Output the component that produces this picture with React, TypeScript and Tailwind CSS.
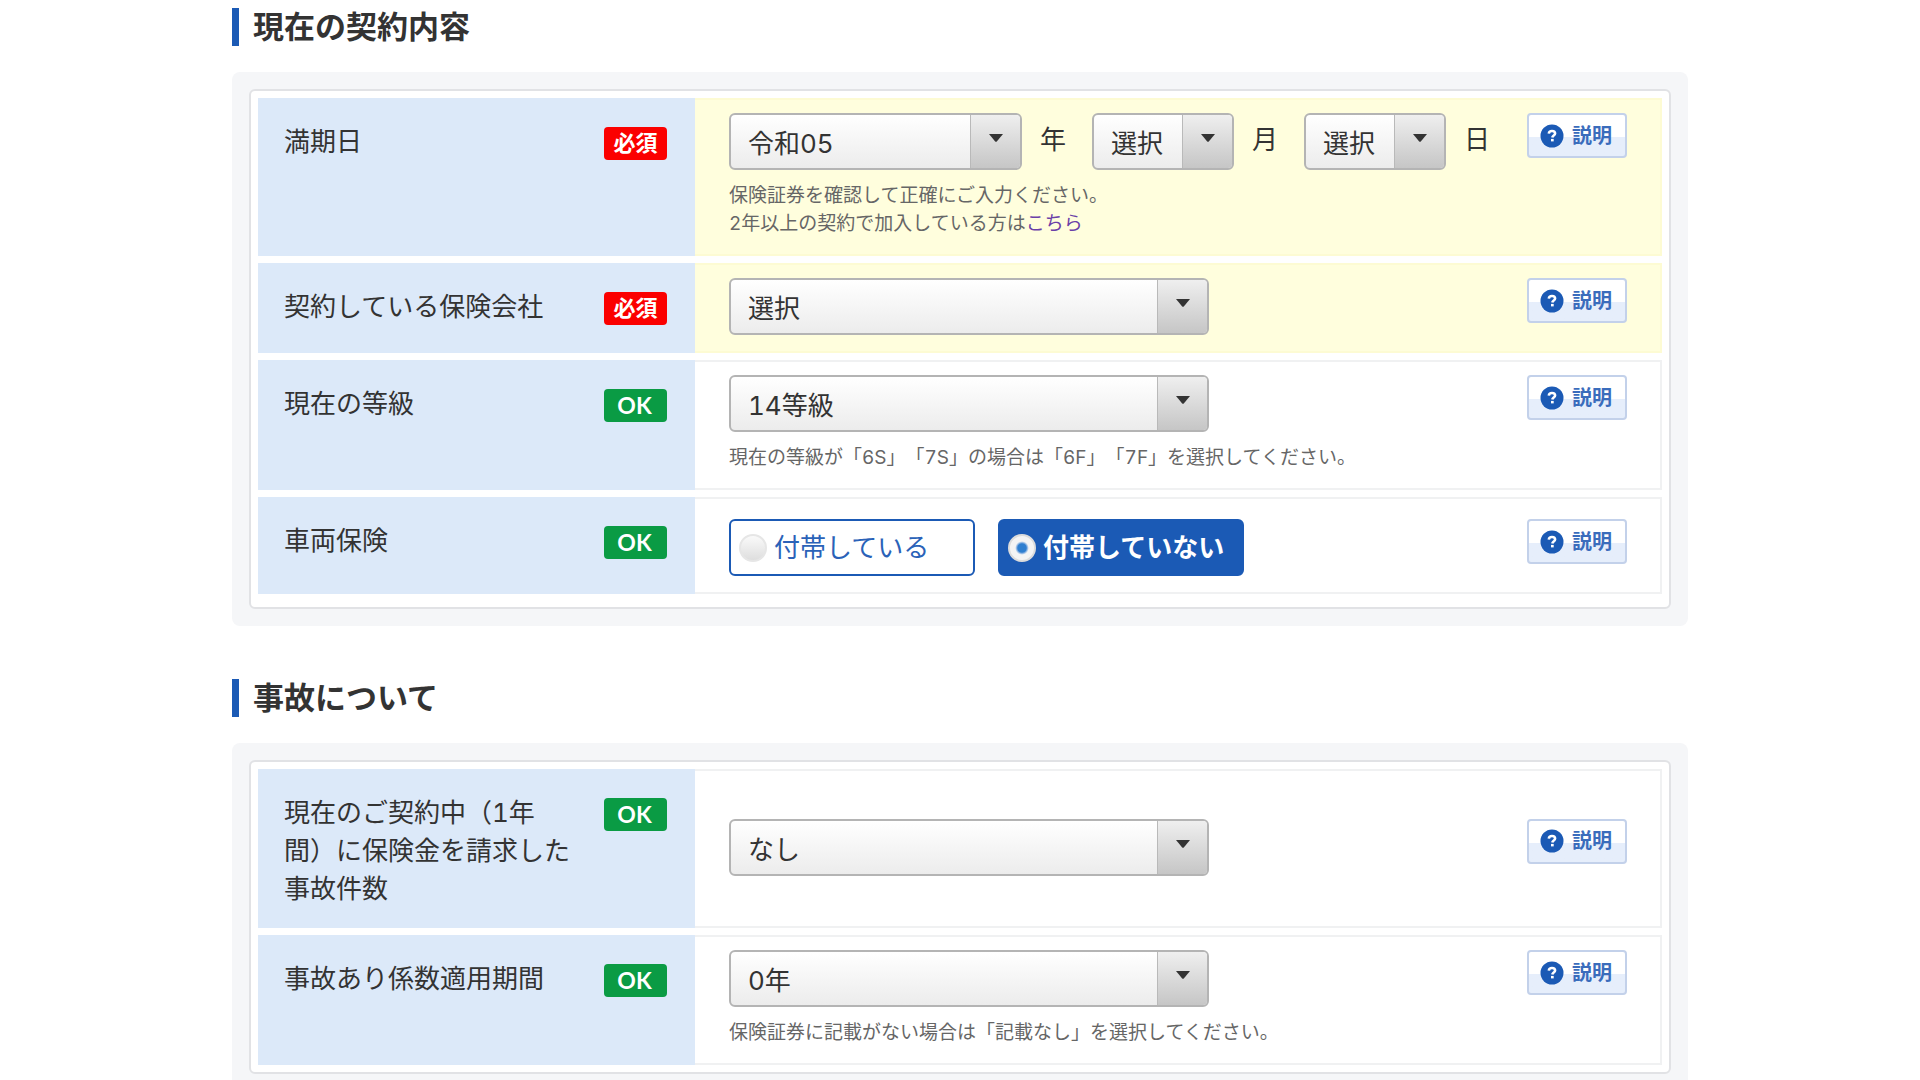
import { useId, useState, type ReactNode } from "react";

const FONT = "font-['Inter','Noto_Sans_CJK_JP',sans-serif] tabular-nums [text-spacing-trim:space-all]";

function Heading({ children }: { children: ReactNode }) {
  return (
    <h2 className="mb-[26px] flex h-[38px] items-center border-l-7 border-[#1b5ab5] pl-3.5 text-[31px] leading-9 font-bold">
      {children}
    </h2>
  );
}

function Panel({ label, roomy, children }: { label: string; roomy?: boolean; children: ReactNode }) {
  return (
    <div className="rounded-lg bg-[#f5f6f8] p-[17px]">
      <div className={`rounded-md border-2 border-[#e1e2e5] bg-white px-[7px] ${roomy ? "pb-1.5" : ""}`}>
        <table aria-label={label} className="w-full table-fixed border-separate border-spacing-x-0 border-spacing-y-[7px]">
          <tbody>{children}</tbody>
        </table>
      </div>
    </div>
  );
}

function Badge({ ok }: { ok?: boolean }) {
  return ok ? (
    <span className="mt-1 flex h-[33px] w-[63px] shrink-0 items-center justify-center rounded-[4px] bg-[#0a9b44] pr-0.5 font-['Lato',sans-serif] text-[23px] leading-none font-bold text-white">
      OK
    </span>
  ) : (
    <span className="mt-1 flex h-[33px] w-[63px] shrink-0 items-center justify-center rounded-[4px] bg-[#fb0000] pb-0.5 text-[22px] leading-none font-bold text-white">
      必須
    </span>
  );
}

function HelpButton() {
  return (
    <button
      type="button"
      className="flex h-[45px] w-[100px] shrink-0 items-center gap-2 rounded-[4px] border-2 border-[#c3d1ea] bg-linear-to-b from-white from-53% to-[#e6eefb] to-53% pl-[11px] text-xl leading-none font-bold text-[#3a6cbc]"
    >
      <svg viewBox="0 0 24 24" className="size-6 shrink-0" aria-hidden="true">
        <circle cx="12" cy="12" r="11.5" fill="#1b5ab5" />
        <path d="M8.8 9.6c.2-1.7 1.5-2.6 3.2-2.6 1.8 0 3.1 1 3.1 2.5 0 2-2.6 2-2.8 4" fill="none" stroke="#fff" strokeWidth="2.6" />
        <rect x="11" y="14.9" width="2.7" height="2.5" fill="#fff" />
      </svg>
      説明
    </button>
  );
}

function Row({
  title,
  required,
  tall,
  children,
}: {
  title: string;
  required?: boolean;
  tall?: boolean;
  children: ReactNode;
}) {
  return (
    <tr>
      <th scope="row" className="w-[437px] bg-[#dce9f9] pt-[25px] pr-7 pb-5 pl-[26px] text-left align-top font-normal">
        <div className="flex items-start justify-between">
          <span className="w-[290px] text-[26px] leading-[38px]">{title}</span>
          <Badge ok={!required} />
        </div>
      </th>
      <td
        className={`border-y-2 border-r-2 pr-[33px] pb-4 pl-[34px] align-middle ${tall ? "pt-5" : "pt-[13px]"} ${
          required ? "border-[#fdfbd3] bg-[#fffedd]" : "border-[#f0f1f2] bg-white"
        }`}
      >
        <div className="flex items-start justify-between">
          <div>{children}</div>
          <HelpButton />
        </div>
      </td>
    </tr>
  );
}

function Select({ label, width, options }: { label: string; width: string; options: string[] }) {
  return (
    <div className={`relative h-[57px] ${width}`}>
      <select
        aria-label={label}
        className="block size-full appearance-none rounded-[6px] border-2 border-[#b4b4b4] bg-linear-to-b from-white to-[#ececec] pt-1 pr-[52px] pl-[17px] text-[26px] text-[#333]"
      >
        {options.map((o) => (
          <option key={o}>{o}</option>
        ))}
      </select>
      <span className="pointer-events-none absolute inset-y-0.5 right-0.5 flex w-[50px] justify-center rounded-r-[4px] border-l border-[#b9b9b9] bg-linear-to-b from-[#efefef] to-[#c6c6c6]">
        <svg viewBox="0 0 14 8" className="mt-[19px] h-2 w-3.5" aria-hidden="true">
          <path d="M0 0h14L7.8 7.4q-.8.8-1.6 0z" fill="#333" />
        </svg>
      </span>
    </div>
  );
}

function Unit({ children, last }: { children: ReactNode; last?: boolean }) {
  return <span className={`ml-[18px] pb-1 text-[26px] leading-[38px] ${last ? "" : "mr-[26px]"}`}>{children}</span>;
}

function Note({ children }: { children: ReactNode }) {
  return <p className="mt-3 text-[19px] leading-7 text-[#666]">{children}</p>;
}

function RadioCard({
  name,
  label,
  checked,
  onChange,
}: {
  name: string;
  label: string;
  checked: boolean;
  onChange: () => void;
}) {
  const id = useId();
  return (
    <label
      htmlFor={id}
      className={`flex h-[57px] w-[246px] cursor-pointer items-center gap-[7px] rounded-[6px] border-2 border-[#1b5ab5] pl-2 text-[26px] leading-none ${
        checked ? "bg-[#1b5ab5] font-bold text-white" : "bg-white text-[#2a62b8]"
      }`}
    >
      <input
        id={id}
        type="radio"
        name={name}
        checked={checked}
        onChange={onChange}
        className={`size-7 shrink-0 appearance-none rounded-full border-2 ${
          checked
            ? "border-[#dcdcdc] bg-radial from-[#2f7fd0] from-25% to-[#f4f4f4] to-40%"
            : "border-[#e6e6e6] bg-linear-to-b from-[#fafafa] to-[#dedede]"
        }`}
      />
      <span>{label}</span>
    </label>
  );
}

export default function App() {
  const [covered, setCovered] = useState(false);
  return (
    <main className={`mx-auto w-full max-w-[1456px] bg-white pt-2 text-[#333] ${FONT}`}>
      <section className="mb-[53px]">
        <Heading>現在の契約内容</Heading>
        <Panel label="現在の契約内容" roomy>
          <Row title="満期日" required>
            <div className="flex items-center">
              <Select label="満期日の年" width="w-[293px]" options={["令和05", "令和06"]} />
              <Unit>年</Unit>
              <Select label="満期日の月" width="w-[142px]" options={["選択", "1", "2", "3"]} />
              <Unit>月</Unit>
              <Select label="満期日の日" width="w-[142px]" options={["選択", "1", "2", "3"]} />
              <Unit last>日</Unit>
            </div>
            <Note>
              保険証券を確認して正確にご入力ください。
              <br />
              2年以上の契約で加入している方は
              <a href="#multi-year" className="text-[#6b3fa8]">
                こちら
              </a>
            </Note>
          </Row>
          <Row title="契約している保険会社" required>
            <Select label="契約している保険会社" width="w-[480px]" options={["選択"]} />
          </Row>
          <Row title="現在の等級">
            <Select label="現在の等級" width="w-[480px]" options={["14等級", "15等級"]} />
            <Note>現在の等級が「6S」「7S」の場合は「6F」「7F」を選択してください。</Note>
          </Row>
          <Row title="車両保険" tall>
            <div className="flex gap-[23px]" role="radiogroup" aria-label="車両保険">
              <RadioCard name="vehicle" label="付帯している" checked={covered} onChange={() => setCovered(true)} />
              <RadioCard name="vehicle" label="付帯していない" checked={!covered} onChange={() => setCovered(false)} />
            </div>
          </Row>
        </Panel>
      </section>
      <section>
        <Heading>事故について</Heading>
        <Panel label="事故について">
          <Row title="現在のご契約中（1年間）に保険金を請求した事故件数">
            <Select label="事故件数" width="w-[480px]" options={["なし", "1件", "2件"]} />
          </Row>
          <Row title="事故あり係数適用期間">
            <Select label="事故あり係数適用期間" width="w-[480px]" options={["0年", "1年", "2年"]} />
            <Note>保険証券に記載がない場合は「記載なし」を選択してください。</Note>
          </Row>
        </Panel>
      </section>
    </main>
  );
}
